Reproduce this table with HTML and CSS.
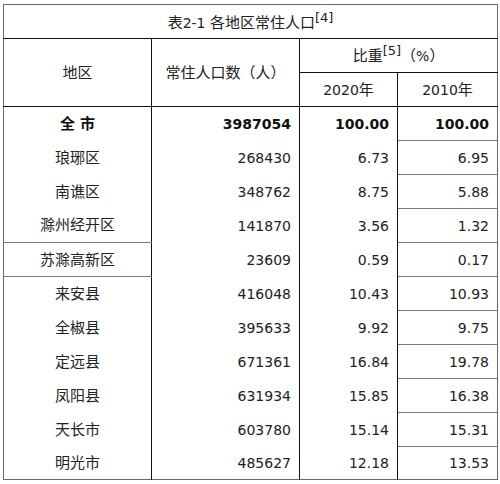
FILE: index.html
```html
<!DOCTYPE html>
<html lang="zh">
<head>
<meta charset="utf-8">
<link rel="stylesheet" href="styles.css">
</head>
<body>
<table class="pop">
  <colgroup>
    <col class="c1"><col class="c2"><col class="c3"><col class="c4">
  </colgroup>
  <tr class="title-row">
    <td colspan="4" class="title">表<span class="d">2-1 </span>各地区常住人口<sup>[4]</sup></td>
  </tr>
  <tr class="head-row">
    <td rowspan="2" class="h vr hb">地区</td>
    <td rowspan="2" class="h vr hb">常住人口数（人）</td>
    <td colspan="2" class="h sb">比重<sup>[5]</sup>（<span class="d">%</span>）</td>
  </tr>
  <tr class="head-row">
    <td class="h vr hb"><span class="d">2020</span>年</td>
    <td class="h hb"><span class="d">2010</span>年</td>
  </tr>
  <tr class="total">
    <td class="name vr"><b>全 市</b></td>
    <td class="num vr"><b>3987054</b></td>
    <td class="num vr"><b>100.00</b></td>
    <td class="num g"><b>100.00</b></td>
  </tr>
  <tr><td class="name vr">琅琊区</td><td class="num vr">268430</td><td class="num vr">6.73</td><td class="num g">6.95</td></tr>
  <tr><td class="name vr">南谯区</td><td class="num vr">348762</td><td class="num vr">8.75</td><td class="num g">5.88</td></tr>
  <tr><td class="name vr g">滁州经开区</td><td class="num vr">141870</td><td class="num vr">3.56</td><td class="num g">1.32</td></tr>
  <tr><td class="name vr g">苏滁高新区</td><td class="num vr">23609</td><td class="num vr">0.59</td><td class="num g">0.17</td></tr>
  <tr><td class="name vr">来安县</td><td class="num vr">416048</td><td class="num vr">10.43</td><td class="num g">10.93</td></tr>
  <tr><td class="name vr">全椒县</td><td class="num vr">395633</td><td class="num vr">9.92</td><td class="num g">9.75</td></tr>
  <tr><td class="name vr">定远县</td><td class="num vr">671361</td><td class="num vr">16.84</td><td class="num g">19.78</td></tr>
  <tr><td class="name vr">凤阳县</td><td class="num vr">631934</td><td class="num vr">15.85</td><td class="num g">16.38</td></tr>
  <tr><td class="name vr">天长市</td><td class="num vr">603780</td><td class="num vr">15.14</td><td class="num g">15.31</td></tr>
  <tr class="last"><td class="name vr">明光市</td><td class="num vr">485627</td><td class="num vr">12.18</td><td class="num">13.53</td></tr>
</table>
</body>
</html>
```

FILE: styles.css
```css
html, body {
  margin: 0;
  padding: 0;
  background: #ffffff;
}

body {
  padding: 4px 0 0 3px;
  font-family: "DejaVu Sans", "Noto Sans CJK SC", sans-serif;
  font-size: 14px;
  color: #222222;
}

.pop {
  border-collapse: collapse;
  table-layout: fixed;
  width: 494px;
  border: 1px solid #6a6a6a;
}

.c1 { width: 148px; }
.c2 { width: 148px; }
.c3 { width: 98px; }
.c4 { width: 100px; }

.pop td {
  padding: 0;
  height: 33px;
  line-height: 20px;
  vertical-align: middle;
}

.pop td.title {
  text-align: center;
  font-size: 15px;
  height: 30px;
  padding-top: 3px;
  border-bottom: 1px solid #111111;
}

.d {
  font-size: 14px;
}

sup {
  font-size: 13px;
  line-height: 0;
  vertical-align: 6px;
}

.h {
  text-align: center;
  font-size: 15px;
}

.vr { border-right: 1px solid #111111; }
.hb { border-bottom: 1px solid #111111; }
.sb { border-bottom: 1px solid #111111; }
.g { border-bottom: 1px solid #7a7a7a; }

.name {
  text-align: center;
  font-size: 15px;
}

.num {
  text-align: right;
  padding-right: 8px !important;
}

.pop td b {
  font-weight: bold;
  color: #111111;
}

.last td { height: 32px; }
```
